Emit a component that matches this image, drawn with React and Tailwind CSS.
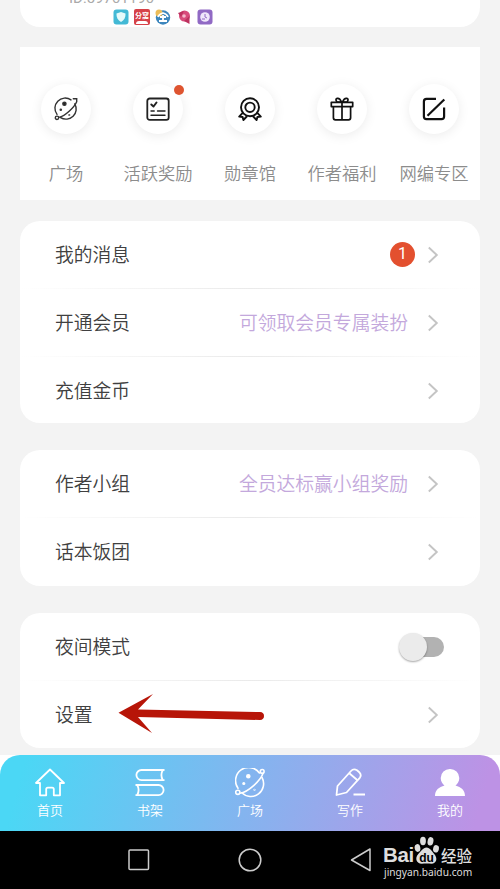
const shortcuts = [
    { label: '广场', icon: PlanetIcon },
    { label: '活跃奖励', icon: ChecklistIcon, dot: true },
    { label: '勋章馆', icon: MedalIcon },
    { label: '作者福利', icon: GiftIcon },
    { label: '网编专区', icon: EditIcon },
]

const tabs = [
    { label: '首页', icon: HomeIcon },
    { label: '书架', icon: BooksIcon },
    { label: '广场', icon: PlanetTabIcon },
    { label: '写作', icon: PencilIcon },
    { label: '我的', icon: UserIcon },
]

function PlanetIcon() {
    return (
        <svg width="24" height="24" viewBox="0 0 24 24" fill="none" stroke="#333" strokeWidth="1.4" strokeLinecap="round">
            <path d="M17 2.9A10.2 10.2 0 0 0 3 17.4M6.6 20.6A10.2 10.2 0 0 0 20.8 6.8" />
            <path d="M19.3 1.8h3.400v3C20.500 10 11.500 19 4.800 20.400" />
            <circle cx="3" cy="20.800" r="1.700" />
            <circle cx="10.400" cy="6.800" r="1.600" fill="#222" />
            <circle cx="6.800" cy="12.800" r=".6" />
            <circle cx="15.300" cy="18" r=".3" />
        </svg>
    )
}

function ChecklistIcon() {
    return (
        <svg width="24" height="24" viewBox="0 0 24 24" fill="none" stroke="#222" strokeWidth="1.8" strokeLinecap="round" strokeLinejoin="round">
            <rect x="1.3" y="1.5" width="21.4" height="21.4" rx="2.4" />
            <path d="m5.3 7.5 2.2 2 3-4" strokeWidth="2" />
            <path d="M5 14h3.2M11.5 14H19M5 18.2h14" strokeWidth="1.4" />
        </svg>
    )
}

function MedalIcon() {
    return (
        <svg width="24" height="24" viewBox="0 0 24 24" fill="none" stroke="#111" strokeWidth="1.9" strokeLinejoin="round">
            <circle cx="12" cy="10.3" r="9" />
            <circle cx="12" cy="10.3" r="4.7" />
            <path d="m4.7 15.8-3.5 3.8 3.4.4.8 3 3.8-4M19.3 15.8l3.5 3.8-3.4.4-.8 3-3.8-4" />
        </svg>
    )
}

function GiftIcon() {
    return (
        <svg width="24" height="24" viewBox="0 0 24 24" fill="none" stroke="#111" strokeWidth="1.7" strokeLinejoin="round">
            <rect x="1.3" y="5.3" width="21.4" height="4.3" />
            <path d="M3.4 9.8v11q0 2 2 2h13.2q2 0 2-2v-11M12 5.5v17" />
            <path d="M11.5 5.2H7q-2.2-3 .2-3.8 2.6-.6 4.3 3.8M12.5 5.2H17q2.2-3-.2-3.800-2.600-.6-4.300 3.800" />
        </svg>
    )
}

function EditIcon() {
    return (
        <svg width="24" height="24" viewBox="0 0 24 24" fill="none" stroke="#111" strokeWidth="2.2">
            <path d="M14 1.9H4.500Q1.900 1.900 1.900 4.500v15q0 2.600 2.600 2.600h15q2.600 0 2.600-2.600v-9" />
            <path d="M22.300 2.500 5.500 18.700" />
        </svg>
    )
}

function HomeIcon() {
    return (
        <svg width="30" height="30" viewBox="0 0 30 30" fill="none" stroke="white" strokeWidth="1.8" strokeLinejoin="round">
            <path d="M15 1.500 1 15h4v12.300h6.200v-6q0-1.600 1.600-1.600h4.400q1.600 0 1.600 1.600v6H25V15h4Z" />
        </svg>
    )
}

function BooksIcon() {
    return (
        <svg width="30" height="30" viewBox="0 0 30 30" fill="none" stroke="white" strokeWidth="1.8" strokeLinejoin="round">
            <path d="M29.500 2H6.500a5 5 0 0 0 0 10.200h23M27.800 2q-2.800 5 0 10.200M.5 17h23a5 5 0 0 1 0 10.200H.5M2.200 17q2.800 5 0 10.200" />
        </svg>
    )
}

function PlanetTabIcon() {
    return (
        <svg width="30" height="30" viewBox="0 0 30 30" fill="none" stroke="white" strokeWidth="1.6" strokeLinecap="round">
            <path d="M24.400 5A12.800 12.800 0 0 0 3 20.300M6.800 24.800A12.800 12.800 0 0 0 27 9.500" />
            <path d="M28 5.300C26 12 13.500 24 5 25.200" />
            <circle cx="27.200" cy="3.400" r="1.900" />
            <circle cx="2.800" cy="24.300" r="2.100" />
            <circle cx="13.300" cy="8.300" r="1.500" fill="white" />
            <circle cx="8.800" cy="15.500" r=".8" fill="white" />
            <circle cx="19.500" cy="21.800" r=".3" />
        </svg>
    )
}

function PencilIcon() {
    return (
        <svg width="30" height="30" viewBox="0 0 30 30" fill="none" stroke="white" strokeWidth="1.8" strokeLinejoin="round">
            <path d="m1.500 27 1-9L16 3q2.500-2.700 6-.7l2 1.700q3 2.700.8 5.800L11.500 24.500Z" />
            <path d="m14.300 5.200 8.200 7M18.500 26.500H30" />
        </svg>
    )
}

function UserIcon() {
    return (
        <svg width="30" height="30" viewBox="0 0 30 30" fill="white">
            <path d="M15 1a9 9 0 0 1 9.300 9c0 3.600-2 6-3.800 7.500C26 19 30 22 30 28H0c0-6 4-9 9.500-10.500C7.700 16 5.700 13.600 5.700 10A9 9 0 0 1 15 1Z" />
        </svg>
    )
}

function Chevron() {
    return (
        <svg className="shrink-0" width="12" height="18" viewBox="0 0 12 18" fill="none" stroke="#c4c4c4" strokeWidth="1.9">
            <path d="m1.800 1.500 8 7.500-8 7.500" />
        </svg>
    )
}

function Row({ label, hint, children, last }) {
    return (
        <div className="flex h-[68px] shrink-0 flex-col">
            <div className="flex min-h-0 flex-1 items-center pr-[41px] pl-[35px] text-[18.8px] font-[350]">
                <span className="-mt-px flex-1 text-[#404040]">{label}</span>
                {hint && <span className="-mt-px mr-[19px] text-[#c3a8dc]">{hint}</span>}
                {children || <Chevron />}
            </div>
            {!last && <div className="-mt-px h-px bg-linear-to-r from-transparent via-[#eaeaea] to-transparent" />}
        </div>
    )
}

function AppBadges() {
    return (
        <div className="flex items-center gap-[5px]">
            <svg width="16" height="16" viewBox="0 0 16 16">
                <rect x=".5" y=".5" width="15" height="15" rx="3" fill="#43b9d5" />
                <path d="m8 3 4.500 1.500c.3 4-1.500 7-4.500 8.500-3-1.500-4.800-4.500-4.500-8.500Z" fill="#e6fafa" />
            </svg>
            <div className="flex h-4 w-4 flex-col items-center overflow-hidden rounded-[2px] bg-[#d64148] text-[7px] leading-[12px] font-bold text-white">
                <span className="whitespace-nowrap">分窝</span>
                <span className="h-[3px] w-3 rounded-t bg-white" />
            </div>
            <svg width="16" height="16" viewBox="0 0 16 16">
                <circle cx="8" cy="8.500" r="7.200" fill="#3c86bd" />
                <circle cx="4" cy="4" r="3.500" fill="#edbd58" />
                <path d="M3 8q1-3 5-4 4 1 5 4M5 8h6M8 6v6M4 12h8" stroke="white" strokeWidth="1.8" fill="none" />
            </svg>
            <svg width="16" height="16" viewBox="0 0 16 16">
                <circle cx="8.500" cy="7" r="5.500" fill="#d84b7b" />
                <path d="m8 12 5.500-5v8ZM2 4l6-2-3 6Z" fill="#bd315f" />
                <circle cx="8" cy="7" r="1.800" fill="#f5b9cc" />
            </svg>
            <svg width="16" height="16" viewBox="0 0 16 16">
                <rect x=".5" y=".5" width="15" height="15" rx="3" fill="#9069c4" />
                <circle cx="8" cy="8" r="4.800" fill="#efe7fb" />
                <path d="M8 5v3l2 1M5 10h3" stroke="#9069c4" fill="none" />
            </svg>
        </div>
    )
}

function Watermark() {
    return (
        <div className="flex w-[89px] flex-col text-[#dedede]">
            <div className="flex h-[29px] items-end">
                <span className="w-[31px] text-[20.5px] leading-[20px] font-bold tracking-[-0.3px] font-['Liberation_Sans']">Bai</span>
                <svg width="26" height="29" viewBox="0 0 26 29" fill="#dedede">
                    <ellipse cx="3.500" cy="12" rx="2.800" ry="3.900" transform="rotate(-12 3.500 12)" />
                    <ellipse cx="9" cy="5" rx="2.900" ry="4.200" />
                    <ellipse cx="16.500" cy="5.300" rx="2.900" ry="4.200" transform="rotate(12 16.500 5.300)" />
                    <ellipse cx="22" cy="12.800" rx="2.900" ry="3.700" transform="rotate(12 22 12.800)" />
                    <path d="M12.500 11.500c3.500 0 5.500 4 7.500 6.300 4.500 5 2 10-2.500 9.900-3-.2-7-.2-9.500 0-5 .3-8-5-3.500-9.900 2.500-2.300 4.500-6.300 8-6.300Z" />
                    <text x="12.500" y="25.500" textAnchor="middle" fontSize="12" fontWeight="bold" fontFamily="Liberation Sans, sans-serif" fill="black">du</text>
                </svg>
                <span className="pl-px text-[15.5px] leading-[20px] font-medium whitespace-nowrap">经验</span>
            </div>
            <span className="pl-px text-[10.2px] leading-[15px] font-['Noto_Sans'] whitespace-nowrap">jingyan.baidu.com</span>
        </div>
    )
}

export default function App() {
    return (
        <main className="relative flex h-[889px] w-[500px] flex-col overflow-hidden bg-[#f3f3f3] font-['Noto_Sans_CJK_SC',sans-serif]">
            <section className="mx-5 flex h-[27px] shrink-0 flex-col rounded-b-[20px] bg-white">
                <div className="-mt-[10px] h-[19px] pl-[49px] text-[15px] leading-[17px] font-['Roboto'] text-[#aaa]">ID:59761196</div>
                <div className="pl-[93px]">
                    <AppBadges />
                </div>
            </section>

            <section className="mx-5 mt-5 grid h-[153px] shrink-0 grid-cols-5 bg-white pt-[37px]">
                {shortcuts.map(({ label, icon: Icon, dot }) => (
                    <div key={label} className="flex flex-col items-center">
                        <div className="relative flex h-[50px] w-[50px] items-center justify-center rounded-full bg-white shadow-[0_2px_12px_rgba(0,0,0,0.08)]">
                            <Icon />
                            {dot && <span className="absolute top-[1px] -right-[1px] h-[10px] w-[10px] rounded-full bg-[#de5430]" />}
                        </div>
                        <span className="mt-[27px] text-[17.3px] leading-6 font-[350] whitespace-nowrap text-[#8c8c8c]">{label}</span>
                    </div>
                ))}
            </section>

            <section className="mx-5 mt-[21px] flex h-[202px] shrink-0 flex-col rounded-[20px] bg-white">
                <Row label="我的消息">
                    <span className="-mt-[2px] mr-[12px] flex h-[25px] w-[25px] items-center justify-center rounded-full bg-[#e3502f] text-[16px] font-normal font-['Roboto'] text-white">1</span>
                    <Chevron />
                </Row>
                <Row label="开通会员" hint="可领取会员专属装扮" />
                <Row label="充值金币" last />
            </section>

            <section className="mx-5 mt-[27px] flex h-[136px] shrink-0 flex-col rounded-[20px] bg-white">
                <Row label="作者小组" hint="全员达标赢小组奖励" />
                <Row label="话本饭团" last />
            </section>

            <section className="mx-5 mt-[27px] flex h-[135px] shrink-0 flex-col rounded-[20px] bg-white">
                <Row label="夜间模式">
                    <span className="-mr-[5px] flex h-5 w-[42px] items-center rounded-full bg-[#b2b2b2]">
                        <span className="-ml-[3px] h-7 w-7 shrink-0 rounded-full bg-[#ebebeb] shadow-[0_1px_2px_rgba(0,0,0,0.35)]" />
                    </span>
                </Row>
                <Row label="设置" last />
            </section>

            <nav className="mt-[7px] h-[76px] shrink-0 bg-white">
                <div className="grid h-full grid-cols-5 rounded-t-[20px] bg-[linear-gradient(105deg,#4bd7f5_5%,#84b4ef_50%,#bd92e5_95%)] pt-[13px]">
                    {tabs.map(({ label, icon: Icon }) => (
                        <div key={label} className="flex flex-col items-center text-white">
                            <Icon />
                            <span className="mt-[2px] text-[13px] leading-5 font-[350]">{label}</span>
                        </div>
                    ))}
                </div>
            </nav>

            <footer className="flex h-[58px] shrink-0 items-center bg-black pl-[128px]">
                <svg width="22" height="24" viewBox="0 0 22 24" fill="none" stroke="#ccc" strokeWidth="1.5">
                    <rect x="1" y="2" width="19.5" height="19.5" rx="1" />
                </svg>
                <svg className="ml-[88px]" width="24" height="24" viewBox="0 0 24 24" fill="none" stroke="#ccc" strokeWidth="1.5">
                    <circle cx="12" cy="12" r="10.8" />
                </svg>
                <svg className="ml-[88px]" width="22" height="24" viewBox="0 0 22 24" fill="none" stroke="#ccc" strokeWidth="1.5" strokeLinejoin="round">
                    <path d="M20 1v21.500L1.500 12Z" />
                </svg>
                <div className="-mt-[4px] ml-[11px]">
                    <Watermark />
                </div>
            </footer>

            {/* pointer to the settings row */}
            <svg className="absolute top-[692px] left-[118px]" width="148" height="42" viewBox="0 0 148 42">
                <path d="M.5 20.800 35 2 20 17.500l122 2.500q4 .3 4 4t-4 4L20 25l14 16Z" fill="#b71508" />
            </svg>
        </main>
    )
}
